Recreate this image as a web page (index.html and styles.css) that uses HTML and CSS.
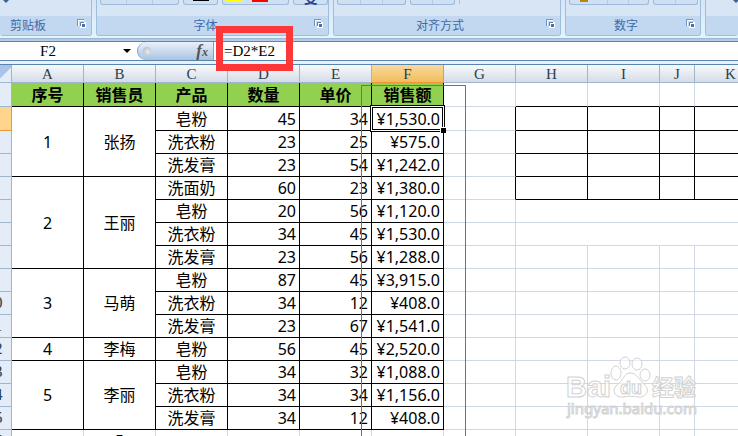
FILE: index.html
```
<!DOCTYPE html>
<html lang="zh-CN">
<head>
    <meta charset="UTF-8">
    <meta name="viewport" content="width=device-width, initial-scale=1.0">
    <title>销售表</title>
    <link rel="stylesheet" href="styles.css">
</head>
<body>
    <svg class="defs" width="0" height="0">
        <symbol id="launcher" viewBox="0 0 10 10">
            <path d="M0.5 7V0.5H7" fill="none" stroke="#6f94bf"/>
            <path d="M1.5 7V1.5H7" fill="none" stroke="#fff"/>
            <rect x="3" y="3" width="6" height="6" fill="#fff"/>
            <path d="M3.5 7V3.5H7" fill="none" stroke="#5a80ae"/>
            <rect x="5" y="5" width="3" height="3" fill="#4a72a4"/>
        </symbol>
    </svg>

    <header class="ribbon">
        <section class="group clipboard">
            <div class="tools"><span class="arrow"></span></div>
            <div class="caption"><span>剪贴板</span><button aria-label="剪贴板"><svg><use href="#launcher"/></svg></button></div>
        </section>
        <section class="group font">
            <div class="tools">
                <div class="box wide"><i></i><i></i><i></i></div>
                <div class="box border-tool"><b class="bar black"></b></div>
                <div class="box colors"><b class="bar yellow"></b><b class="bar red"></b></div>
                <div class="box phonetic"><span>变</span></div>
            </div>
            <div class="caption"><span>字体</span><button aria-label="字体"><svg><use href="#launcher"/></svg></button></div>
        </section>
        <section class="group align">
            <div class="tools">
                <div class="box"><i></i><i></i><i></i></div>
                <div class="box indent"><i></i><i></i></div>
                <div class="divider"></div>
            </div>
            <div class="caption"><span>对齐方式</span><button aria-label="对齐方式"><svg><use href="#launcher"/></svg></button></div>
        </section>
        <section class="group number">
            <div class="tools">
                <div class="box currency"><b></b><i></i><i></i><i></i></div>
                <div class="box decimal"><i></i><i></i></div>
            </div>
            <div class="caption"><span>数字</span><button aria-label="数字"><svg><use href="#launcher"/></svg></button></div>
        </section>
        <section class="group style">
            <div class="tools"><span class="arrow"></span></div>
            <div class="caption"></div>
        </section>
    </header>

    <div class="formula-bar">
        <input class="name-box" type="text" value="F2" aria-label="名称框">
        <button class="drop" aria-label="名称列表"></button>
        <div class="fx"><span class="knob"></span><button aria-label="插入函数">f<small>x</small></button></div>
        <div class="formula">
            <input type="text" value="=D2*E2" aria-label="编辑栏">
            <div class="highlight"></div>
        </div>
    </div>

    <main class="sheet">
        <table id="grid">
            <colgroup>
                <col class="head"><col><col><col><col><col><col><col><col><col><col class="narrow"><col>
            </colgroup>
            <thead>
                <tr><th class="corner"></th><th>A</th><th>B</th><th>C</th><th>D</th><th>E</th><th class="active">F</th><th>G</th><th>H</th><th>I</th><th>J</th><th>K</th></tr>
            </thead>
            <tbody></tbody>
        </table>
        <div class="outline"></div>
        <div class="watermark">
            <svg width="134" height="64" viewBox="0 0 134 64">
                <g fill="#fff" fill-opacity="0.6" stroke="#d2d2d2" stroke-width="1">
                    <ellipse cx="50" cy="17" rx="5" ry="7"/>
                    <ellipse cx="59" cy="7" rx="5" ry="6"/>
                    <ellipse cx="71" cy="8" rx="5" ry="6"/>
                    <ellipse cx="79" cy="19" rx="5" ry="6"/>
                    <path d="M64 17C58 17 57 25 51 29C45 34 49 42 57 41C62 40 67 40 72 41C80 42 85 34 78 28C72 23 71 17 64 17Z"/>
                    <text class="wm-logo" x="0" y="41">Bai</text>
                    <text class="wm-du" x="54" y="38">du</text>
                    <text class="wm-cn" x="86" y="39">经验</text>
                    <text class="wm-url" x="1" y="58">jingyan.baidu.com</text>
                </g>
            </svg>
        </div>
    </main>

    <script src="script.js"></script>
</body>
</html>
```
FILE: styles.css
```
* {
    box-sizing: border-box;
}
body {
    margin: 0;
    height: 100vh;
    overflow: hidden;
    display: flex;
    flex-direction: column;
    background-color: #fff;
    color: #000;
    font-family: "Noto Sans", "Noto Sans CJK SC", sans-serif;
    font-size: 16px;
}
button, input {
    padding: 0;
    border: none;
    background: none;
    color: inherit;
    font: inherit;
}
.defs {
    position: absolute;
}

/* ribbon */
.ribbon {
    display: flex;
    gap: 4px;
    height: 41px;
    padding-bottom: 5px;
    background: linear-gradient(#d5e5f6 0, #e3f3fd 35px, #e3f3fd 38px, #8fb0d0 38px, #a9c4de 39px, #bdd3ea 41px);
}
.group {
    flex: none;
    width: 233px;
    border: 1px solid #9ebfdb;
    border-top: none;
    border-radius: 0 0 3px 3px;
    background-color: #d7e5f4;
    overflow: hidden;
}
.clipboard {
    width: 92px;
    border-left: none;
}
.align {
    width: 228px;
}
.number {
    width: 136px;
}
.style {
    flex: 1;
    border-right: none;
}
.tools {
    display: flex;
    gap: 4px;
    height: 16px;
    padding-left: 3px;
}
.caption {
    display: flex;
    align-items: center;
    height: 19px;
    padding: 1px 4px 0 0;
    background-color: #c1d8f0;
    color: #3e6aaa;
    font-size: 12px;
    line-height: 18px;
}
.caption span {
    flex: 1;
    text-align: center;
}
.clipboard .caption span {
    text-align: left;
    padding-left: 10px;
}
.caption button {
    width: 10px;
    height: 10px;
    margin-bottom: 4px;
}
.caption svg {
    display: block;
    width: 10px;
    height: 10px;
}
.arrow {
    width: 6px;
    height: 3px;
    border: 3px solid transparent;
    border-top-color: #3b5f96;
    border-bottom: none;
}
.style .arrow {
    margin-left: 24px;
}
.box {
    display: flex;
    width: 69px;
    height: 5px;
    border: 1px solid #9db9dc;
    border-top: none;
    border-radius: 0 0 3px 3px;
    background-color: #cfe0f3;
}
.box i {
    flex: 1;
    border-right: 1px solid #b4cae6;
}
.box i:last-child {
    border-right: none;
}
.box.wide {
    width: 80px;
}
.border-tool {
    width: 35px;
    justify-content: center;
}
.colors {
    width: 68px;
    gap: 10px;
    padding-left: 3px;
}
.phonetic {
    width: 35px;
    justify-content: center;
    align-items: flex-end;
    color: #28418f;
    font-size: 14px;
    font-weight: bold;
    line-height: 12px;
}
.bar {
    width: 16px;
    height: 2px;
}
.black {
    height: 1px;
    background-color: #000;
}
.yellow {
    background-color: #ff0;
}
.red {
    background-color: #f00;
}
.indent, .decimal {
    width: 45px;
}
.divider {
    width: 1px;
    height: 4px;
    background-color: #a9c2e0;
}
.currency {
    width: 80px;
    padding-left: 10px;
}
.currency b {
    width: 8px;
    height: 2px;
    background-color: #b8860b;
}

/* formula bar */
.formula-bar {
    display: flex;
    align-items: stretch;
    height: 24px;
    padding-bottom: 4px;
    border-top: 1px solid #5a86ad;
    border-bottom: 1px solid #5a86ad;
    background: linear-gradient(#fff 0, #fff 18px, #5a86ad 18px, #5a86ad 19px, #e6f1fb 19px);
    font-family: "Liberation Serif", serif;
}
.name-box {
    width: 96px;
    text-align: center;
    font-size: 15px;
}
.drop {
    width: 8px;
    height: 4px;
    align-self: center;
    margin: 0 6px 0 27px;
    background-color: #000;
    clip-path: polygon(0 0, 100% 0, 50% 100%);
}
.fx {
    display: flex;
    align-items: center;
    justify-content: space-between;
    width: 77px;
    padding: 0 5px;
    border: solid #7d9fc6;
    border-width: 0 1px;
    border-radius: 10px 0 0 10px;
    background: linear-gradient(#e9f1fb, #a9c3e3);
}
.knob {
    width: 8px;
    height: 8px;
    border-radius: 50%;
    background: radial-gradient(circle at 60% 60%, #eee, #a5b0be);
}
.fx button {
    color: #555;
    font-size: 17px;
    font-style: italic;
    font-weight: bold;
    line-height: 18px;
}
.fx small {
    font-size: 12px;
}
.formula {
    position: relative;
    flex: 1;
}
.formula input {
    display: block;
    width: 100%;
    height: 19px;
    padding-left: 10px;
    font-size: 15px;
}
.highlight {
    position: absolute;
    top: -16px;
    left: 2px;
    width: 77px;
    height: 45px;
    border: 7px solid #fd3737;
    z-index: 1;
}

/* worksheet */
.sheet {
    position: relative;
    flex: 1;
    overflow: hidden;
}
table {
    width: 789px;
    margin-left: -22px;
    border-spacing: 0;
    table-layout: fixed;
}
col {
    width: 72px;
}
col.head {
    width: 34px;
}
col.narrow {
    width: 35px;
}
th, td {
    height: 23px;
    padding: 0;
    border: 0 solid #d0d7e5;
    border-width: 0 1px 1px 0;
    line-height: 20px;
    font-weight: normal;
    overflow: hidden;
    white-space: nowrap;
}
tr.tall > * {
    height: 24px;
}
thead th {
    height: 18px;
    border-color: #9eb6ce;
    background: linear-gradient(#f7fafc, #d5dce8);
    color: #28404a;
    font-family: "Liberation Serif", serif;
    font-size: 15px;
    line-height: 16px;
}
thead th.active {
    border-color: #f29536;
    background: linear-gradient(#f9d99f, #f0bd5c);
}
thead th.corner {
    background: linear-gradient(135deg, #a9c4e9 0, #a9c4e9 72%, #e4ecf7 72%);
}
tbody th {
    border-color: #9eb6ce;
    background-color: #e4ecf7;
    color: #28404a;
    font-family: "Liberation Serif", serif;
}
tbody th.active {
    border-color: #f29536;
    background-color: #ffd58d;
}
.cell {
    border-color: #000;
    text-align: center;
}
.title {
    background-color: #92d050;
    font-weight: bold;
}
.num {
    padding-right: 3px;
    text-align: right;
}
.center {
    text-align: center;
}
.edge {
    border-right-color: #000;
}
.top {
    border-bottom-color: #000;
}
.selected {
    position: relative;
    overflow: visible;
}
.selected::before {
    content: "";
    position: absolute;
    inset: -2px;
    border: 3px solid #000;
    outline: 1px solid #fff;
    outline-offset: -2px;
}
.selected::after {
    content: "";
    position: absolute;
    right: -3px;
    bottom: -3px;
    width: 5px;
    height: 5px;
    border: 1px solid #fff;
    border-width: 1px 0 0 1px;
    background-color: #000;
}
.outline {
    position: absolute;
    top: 20px;
    left: 361px;
    bottom: 0;
    width: 105px;
    border: 1px solid #f03c3c;
    border-bottom: none;
}

/* watermark */
.watermark {
    position: absolute;
    top: 291px;
    left: 566px;
}
.watermark svg {
    display: block;
}
.wm-logo {
    font: bold 29px "Liberation Sans", sans-serif;
}
.wm-du {
    font: bold 18px "Liberation Sans", sans-serif;
}
.wm-cn {
    font: bold 22px "Noto Sans CJK SC", sans-serif;
}
.wm-url {
    font: 15px "Noto Sans", sans-serif;
}
```
FILE: script.js
```
const people = [
    { name: '张扬', sales: [['皂粉', 45, 34, '¥1,530.0'], ['洗衣粉', 23, 25, '¥575.0'], ['洗发膏', 23, 54, '¥1,242.0']] },
    { name: '王丽', sales: [['洗面奶', 60, 23, '¥1,380.0'], ['皂粉', 20, 56, '¥1,120.0'], ['洗衣粉', 34, 45, '¥1,530.0'], ['洗发膏', 23, 56, '¥1,288.0']] },
    { name: '马萌', sales: [['皂粉', 87, 45, '¥3,915.0'], ['洗衣粉', 34, 12, '¥408.0'], ['洗发膏', 23, 67, '¥1,541.0']] },
    { name: '李梅', sales: [['皂粉', 56, 45, '¥2,520.0']] },
    { name: '李丽', sales: [['皂粉', 34, 32, '¥1,088.0'], ['洗衣粉', 34, 34, '¥1,156.0'], ['洗发膏', 34, 12, '¥408.0']] }
];
const body = document.querySelector('#grid tbody');

function td(text, cls, span) {
    return `<td class="${cls || ''}"${span ? ` rowspan="${span}"` : ''}>${text}</td>`;
}

// columns G to K
function rest(row) {
    if (row === 1) return td('') + td('', 'top').repeat(4);
    if (row >= 2 && row <= 5) return td('', 'edge') + td('', 'cell').repeat(4);
    if (row === 6 || row === 7) return td('') + '<td colspan="4"></td>';
    return td('').repeat(5);
}

function addRow(row, cells) {
    body.insertAdjacentHTML('beforeend',
        `<tr class="${row < 3 ? 'tall' : ''}"><th class="${row === 2 ? 'active' : ''}">${row}</th>${cells}${rest(row)}</tr>`);
}

addRow(1, ['序号', '销售员', '产品', '数量', '单价', '销售额'].map(t => td(t, 'cell title')).join(''));

let row = 2;
people.forEach((person, p) => {
    person.sales.forEach(([product, count, price, total], i) => {
        const lead = i ? '' : td(p + 1, 'cell', person.sales.length) + td(person.name, 'cell', person.sales.length);
        addRow(row, lead + td(product, 'cell') + td(count, 'cell num') + td(price, 'cell num')
            + td(total, row === 2 ? 'cell num selected' : 'cell num'));
        row++;
    });
});
addRow(row, td('') + td(people.length, 'center') + td('').repeat(4));
```
